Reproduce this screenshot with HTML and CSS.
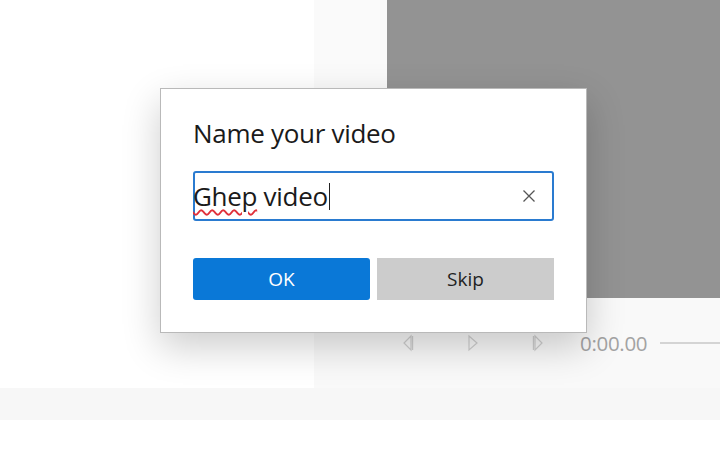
FILE: index.html
```html
<!DOCTYPE html>
<html>
<head>
<meta charset="utf-8">
<link rel="stylesheet" href="styles.css">
</head>
<body>
<div class="app">
  <div class="main">
    <div class="left-panel"></div>
    <div class="right-area">
      <div class="preview-row">
        <div class="preview"></div>
      </div>
      <div class="controls">
        <svg class="ctl" width="16" height="18" viewBox="0 0 16 18"><path d="M11 2 L4 9 L11 16 Z" fill="none" stroke="#cfcfcf" stroke-width="1.2"/><path d="M12.5 2 V16" stroke="#cfcfcf" stroke-width="1.4"/></svg>
        <svg class="ctl" width="16" height="18" viewBox="0 0 16 18"><path d="M4 2 L12 9 L4 16 Z" fill="none" stroke="#cfcfcf" stroke-width="1.2"/></svg>
        <svg class="ctl" width="16" height="18" viewBox="0 0 16 18"><path d="M5 2 L12 9 L5 16 Z" fill="none" stroke="#cfcfcf" stroke-width="1.2"/><path d="M3.5 2 V16" stroke="#cfcfcf" stroke-width="1.4"/></svg>
        <span class="time">0:00.00</span>
        <div class="slider"></div>
      </div>
    </div>
  </div>
  <div class="strip"></div>
  <div class="bottom"></div>

  <div class="dialog">
    <h1 class="title">Name your video</h1>
    <div class="input">
      <span class="value"><span class="misspelled">Ghep</span> video</span><span class="caret"></span>
      <svg class="clear" width="14" height="14" viewBox="0 0 14 14"><path d="M1.5 1.5 L12.5 12.5 M12.5 1.5 L1.5 12.5" stroke="#555" stroke-width="1.3"/></svg>
    </div>
    <div class="buttons">
      <div class="btn ok">OK</div>
      <div class="btn skip">Skip</div>
    </div>
  </div>
</div>
</body>
</html>
```
FILE: styles.css
```css
html, body {
  margin: 0;
  padding: 0;
  width: 720px;
  height: 450px;
  overflow: hidden;
  background: #ffffff;
  font-family: "Open Sans", "Noto Sans", "Liberation Sans", sans-serif;
}
.app {
  position: relative;
  width: 720px;
  height: 450px;
  display: flex;
  flex-direction: column;
}
.main {
  display: flex;
  height: 388px;
}
.left-panel {
  width: 314px;
  background: #ffffff;
}
.right-area {
  flex: 1;
  background: #f9f9f9;
  display: flex;
  flex-direction: column;
}
.preview-row {
  display: flex;
  height: 298px;
  padding-left: 73px;
  background: #fafafa;
}
.preview {
  flex: 1;
  background: #939393;
}
.controls {
  display: flex;
  align-items: center;
  height: 90px;
  padding-left: 86px;
  box-sizing: border-box;
}
.ctl {
  margin-right: 49px;
}
.ctl:nth-child(3) {
  margin-right: 34px;
}
.time {
  font-size: 20.5px;
  color: #a3a3a3;
  letter-spacing: -0.3px;
}
.slider {
  flex: 1;
  height: 2px;
  background: #d4d4d4;
  margin-left: 13px;
}
.strip {
  height: 32px;
  background: #f7f7f7;
}
.bottom {
  flex: 1;
  background: #ffffff;
}
.dialog {
  position: absolute;
  left: 160px;
  top: 88px;
  width: 427px;
  height: 245px;
  box-sizing: border-box;
  background: #ffffff;
  border: 1px solid #b9b9b9;
  box-shadow: 0 14px 36px rgba(0,0,0,0.2);
  padding: 26px 32px 0 32px;
}
.title {
  margin: 0;
  font-weight: 400;
  font-size: 26px;
  line-height: 36px;
  color: #1a1a1a;
  letter-spacing: -0.3px;
}
.input {
  margin-top: 20px;
  height: 50px;
  box-sizing: border-box;
  border: 2px solid #2a7bd0;
  border-radius: 3px;
  display: flex;
  align-items: center;
  position: relative;
}
.value {
  font-size: 26px;
  color: #1a1a1a;
  letter-spacing: -0.3px;
  margin-left: -2px;
  line-height: 32px;
}
.misspelled {
  text-decoration: underline wavy #e0303a;
  text-decoration-thickness: 1.5px;
  text-underline-offset: 3px;
}
.caret {
  width: 1px;
  height: 27px;
  background: #222;
  margin-left: 1px;
}
.clear {
  margin-left: auto;
  margin-right: 16px;
}
.buttons {
  display: flex;
  gap: 7px;
  margin-top: 37px;
}
.btn {
  flex: 1;
  height: 42px;
  display: flex;
  align-items: center;
  justify-content: center;
  font-size: 19px;
}
.ok {
  background: #0a78d7;
  color: #ffffff;
  border-radius: 3px;
}
.skip {
  background: #cccccc;
  color: #222222;
}
```
